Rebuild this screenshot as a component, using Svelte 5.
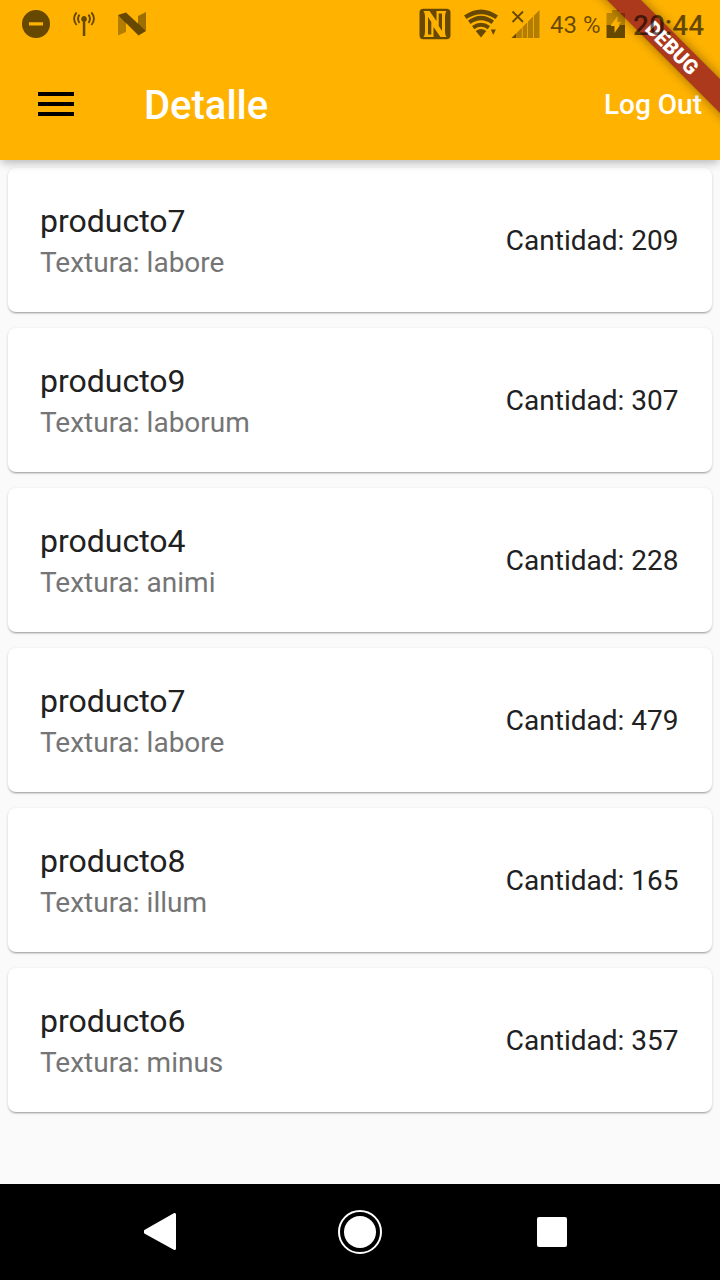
<script>
  const products = [
    { name: 'producto7', texture: 'labore', amount: 209 },
    { name: 'producto9', texture: 'laborum', amount: 307 },
    { name: 'producto4', texture: 'animi', amount: 228 },
    { name: 'producto7', texture: 'labore', amount: 479 },
    { name: 'producto8', texture: 'illum', amount: 165 },
    { name: 'producto6', texture: 'minus', amount: 357 },
  ];
</script>

<div class="screen">
  <header>
    <div class="status">
      <svg class="dnd" width="28" height="28" viewBox="0 0 28 28">
        <path fill-rule="evenodd" d="M14 0a14 14 0 1 0 0 28a14 14 0 0 0 0-28zM7 12.3h14v3.2H7z" />
      </svg>
      <svg class="cast" width="22" height="26" viewBox="0 0 22 26">
        <path d="M9.800 10.600A2.900 2.900 0 1 1 12.300 10.600V25H9.800z" />
        <g fill="none" stroke="currentColor" stroke-width="1.9">
          <path d="M6.500 3.600Q3.600 7.600 6.500 12M15.500 3.600Q18.400 7.600 15.500 12" />
          <path d="M3.600 1.300Q-1.500 7.600 3.600 14M18.400 1.300Q23.500 7.600 18.400 14" />
        </g>
      </svg>
      <svg class="nougat" width="28" height="24" viewBox="0 0 28 24">
        <path opacity=".5" d="M0 3L8 10V20L0 23.500z" />
        <path opacity=".65" d="M28 0V19L20 12V4z" />
        <path d="M0 3L8 .5L28 19L20.500 23.500z" />
      </svg>
      <span class="spacer"></span>
      <svg class="nfc" width="32" height="32" viewBox="0 0 32 32">
        <path fill-rule="evenodd" d="M4.500 .8H27.500Q31.500 .8 31.500 4.500V27.500Q31.500 31.200 27.500 31.200H4.500Q.5 31.200 .5 27.500V4.500Q.5 .8 4.500 .8zM4.500 3Q6 5 6 8V24Q6 27 4.500 29H14.500V19L21.500 29H27.500Q26 27 26 24V8Q26 5 27.500 3H17.500V13L10.500 3zM9 9L12.300 14V26.500H9zM19.700 5.500H23V23L19.700 18z" />
      </svg>
      <svg class="wifi" width="34" height="30" viewBox="0 0 34 30">
        <path d="M0 6.500Q17-5.500 34 6.500L31.500 10Q17 .5 2.500 10z" />
        <path d="M4 11.500Q17 1.800 30 11.500L27.500 15Q17 7.500 6.500 15z" />
        <path d="M8 17Q17 10.500 26 17L23.700 20.200Q17 15.500 10.300 20.200z" />
        <path d="M11.700 22Q17 18.200 22.300 22L17 28.500z" />
        <path d="M26.800 20.500h5l-2.500 5.500z" />
      </svg>
      <svg class="signal" width="30" height="30" viewBox="0 0 30 30">
        <path d="M1.500 2.500L12 13M12 2.500L1.500 13" fill="none" stroke="currentColor" stroke-width="1.800" />
        <path d="M.5 29L5.500 24V29z" />
        <path opacity=".5" d="M6 23.500L10.800 18.700V29H6zM11.600 17.900L16.200 13.300V29h-4.600zM17 12.500L22 7.500V29h-5zM22.800 6.700L28.500 1V29h-5.700z" />
      </svg>
      <span class="percent">43 %</span>
      <svg class="battery" width="20" height="30" viewBox="0 0 20 30">
        <path opacity=".42" d="M6 1h7v3h6v12H12.500L15 13h-3.500V7L5 16H.500V4H6z" />
        <path d="M.5 16H5v1H8.500V24L14 16H19V29H.500z" />
      </svg>
      <span class="clock">20:44</span>
    </div>
    <div class="toolbar">
      <svg class="menu" width="36" height="24" viewBox="0 0 36 24">
        <path d="M0 0h36v4H0zM0 10h36v4H0zM0 20h36v4H0z" />
      </svg>
      <h1>Detalle</h1>
      <span class="logout">Log Out</span>
    </div>
    <div class="corner"><div class="ribbon">DEBUG</div></div>
  </header>

  <main>
    {#each products as p}
      <article>
        <div>
          <div class="name">{p.name}</div>
          <div class="texture">Textura: {p.texture}</div>
        </div>
        <div class="amount">Cantidad: {p.amount}</div>
      </article>
    {/each}
  </main>

  <nav>
    <svg width="34" height="40" viewBox="0 0 34 40">
      <path d="M2.500 19L31.500 2.500V36.500L2.500 20.500z" fill="#fff" stroke="#fff" stroke-width="3" stroke-linejoin="round" />
    </svg>
    <svg width="44" height="44" viewBox="0 0 44 44">
      <circle cx="22" cy="22" r="21" fill="none" stroke="#fff" stroke-width="2" />
      <circle cx="22" cy="22" r="16" fill="#fff" />
    </svg>
    <svg class="recent" width="30" height="30" viewBox="0 0 30 30"><rect width="30" height="30" rx="2" fill="#fff" /></svg>
  </nav>
</div>

<style>
  :global(body) {
    margin: 0;
  }
  .screen {
    width: 720px;
    height: 1280px;
    display: flex;
    flex-direction: column;
    overflow: hidden;
    background: #fafafa;
    font-family: Roboto, sans-serif;
  }
  svg {
    display: block;
    flex: none;
  }
  header {
    position: relative;
    z-index: 1;
    height: 160px;
    flex: none;
    background: #ffb300;
    box-shadow: 0 4px 8px -2px rgba(0, 0, 0, 0.16), 0 5px 9px rgba(0, 0, 0, 0.08), 0 1px 14px rgba(0, 0, 0, 0.06);
  }
  .status {
    position: relative;
    z-index: 2;
    height: 48px;
    box-sizing: border-box;
    padding: 0 15px 0 22px;
    display: flex;
    align-items: center;
    color: rgba(0, 0, 0, 0.6);
    white-space: nowrap;
  }
  .status svg {
    fill: currentColor;
  }
  .cast {
    margin-left: 23px;
  }
  .nougat {
    margin-left: 23px;
  }
  .spacer {
    flex: 1;
  }
  .wifi {
    margin-left: 13px;
  }
  .signal {
    margin-left: 13px;
  }
  .percent {
    width: 50px;
    margin-left: 9px;
    font-size: 24px;
    padding-top: 2px;
  }
  .battery {
    margin-left: 6px;
  }
  .clock {
    width: 72px;
    margin-left: 7px;
    font-size: 28px;
    font-weight: 500;
    padding-top: 2px;
  }
  .toolbar {
    height: 112px;
    box-sizing: border-box;
    padding: 0 18px 0 38px;
    display: flex;
    align-items: center;
    color: #fff;
  }
  .menu {
    fill: #000;
  }
  h1 {
    margin: 0 0 0 70px;
    padding-top: 3px;
    flex: 1;
    font-size: 40px;
    font-weight: 500;
    line-height: 48px;
  }
  .logout {
    font-size: 28px;
    font-weight: 500;
  }
  .corner {
    position: absolute;
    z-index: 1;
    top: 0;
    right: 0;
    width: 200px;
    height: 160px;
    overflow: hidden;
  }
  .ribbon {
    position: absolute;
    left: 32px;
    top: 36px;
    width: 240px;
    height: 24px;
    transform: rotate(45deg);
    background: #ac391b;
    box-shadow: 0 0 12px rgba(0, 0, 0, 0.4);
    color: #fff;
    font-size: 20.4px;
    font-weight: 900;
    line-height: 24px;
    text-align: center;
  }
  main {
    flex: 1;
    padding: 8px;
    display: flex;
    flex-direction: column;
    gap: 16px;
  }
  article {
    height: 144px;
    box-sizing: border-box;
    padding: 2px 33.5px 0 32px;
    display: flex;
    align-items: center;
    justify-content: space-between;
    background: #fff;
    border-radius: 8px;
    box-shadow: 0 2px 2px -1px rgba(0, 0, 0, 0.28), 0 1px 3px rgba(0, 0, 0, 0.16);
    color: #212121;
  }
  .name {
    font-size: 32px;
    line-height: 42px;
  }
  .texture {
    padding-top: 1px;
    margin-bottom: -1px;
    font-size: 28px;
    line-height: 40px;
    color: #757575;
  }
  .amount {
    font-size: 28px;
    line-height: 36px;
  }
  nav {
    height: 96px;
    flex: none;
    box-sizing: border-box;
    padding: 0 153px 0 143px;
    display: grid;
    grid-template-columns: 195px 1fr 30px;
    align-items: center;
    background: #000;
  }
</style>
